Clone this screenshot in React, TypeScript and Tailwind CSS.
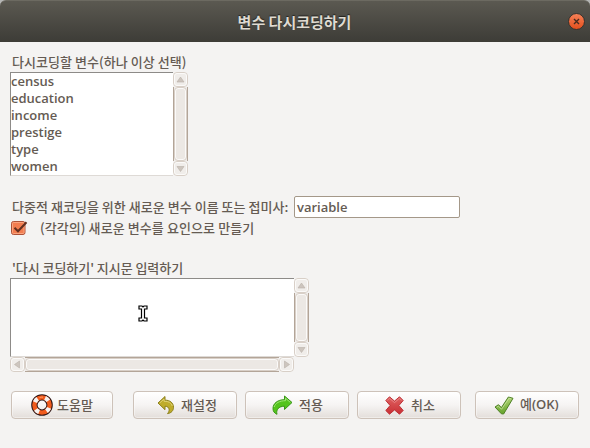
import React from "react";

const variables = ["census", "education", "income", "prestige", "type", "women"];

function Arrow({ dir }: { dir: "up" | "down" | "left" | "right" }) {
  const points = {
    up: "7.5,5 11,10 4,10",
    down: "4,5.5 11,5.5 7.5,10.5",
    left: "4.5,7.5 9.5,4 9.5,11",
    right: "5.5,4 10.5,7.5 5.5,11",
  }[dir];
  return (
    <svg width="15" height="15" viewBox="0 0 15 15" className="block shrink-0">
      <rect x="0.5" y="0.5" width="14" height="14" rx="3.5" fill="#f0edea" stroke="#d8cfc7" />
      <rect x="1.5" y="1.5" width="12" height="12" rx="2.5" fill="none" stroke="#fbfaf9" />
      <polygon points={points} fill="#cdc5be" stroke="#b9b0a8" strokeWidth="0.6" />
    </svg>
  );
}

function VScroll({ height }: { height: string }) {
  return (
    <div className={`flex w-[15px] shrink-0 flex-col ${height}`}>
      <Arrow dir="up" />
      <div className="min-h-0 flex-1 border-x border-[#b3a598] bg-[#f0edea]">
        <div className="h-full rounded-[4px] border border-[#d8cfc7] bg-[#ece8e4] shadow-[inset_0_0_0_1px_#fbfaf9]" />
      </div>
      <Arrow dir="down" />
    </div>
  );
}

function HScroll() {
  return (
    <div className="flex h-[15px] w-[284px]">
      <Arrow dir="left" />
      <div className="min-w-0 flex-1 border-y border-[#b3a598] bg-[#f0edea]">
        <div className="h-full rounded-[4px] border border-[#d8cfc7] bg-[#ece8e4] shadow-[inset_0_0_0_1px_#fbfaf9]" />
      </div>
      <Arrow dir="right" />
    </div>
  );
}

function HelpIcon() {
  return (
    <svg width="22" height="22" viewBox="0 0 22 22" className="block shrink-0">
      <circle cx="11" cy="11" r="7.6" fill="none" stroke="#2c1414" strokeWidth="6.4" />
      <circle cx="11" cy="11" r="7.6" fill="none" stroke="#f05a1c" strokeWidth="4.4" />
      <circle cx="11" cy="11" r="7.6" fill="none" stroke="#f6f2f0" strokeWidth="4.4" strokeDasharray="4.2 7.74" strokeDashoffset="-2.9" />
      <path d="M8.5 3.6Q10 3 12 3.2" fill="none" stroke="#ff9a68" strokeWidth="1" />
    </svg>
  );
}

function UndoIcon() {
  return (
    <svg width="18" height="20" viewBox="0 0 18 20" className="block shrink-0">
      <path d="M1 8L8 1.5V5.2C13 5 16.5 8 16.5 12.3C16.5 15.5 14.5 18 10.5 18.6C12.7 16.4 13.4 11.5 8 11.2V14.7Z" fill="#bfac2b" stroke="#8c801c" />
      <path d="M2.8 7.9L7 4.1V6.3C11.5 6 14.5 8 15.3 11" fill="none" stroke="#ded071" strokeWidth="1" />
    </svg>
  );
}

function ApplyIcon() {
  return (
    <svg width="21" height="20" viewBox="0 0 21 20" className="block shrink-0">
      <path d="M20 7.5L12.5 1V4.7C5.5 4.7 1 8.5 1 13.5C1 16.2 2.3 18.2 5 19.3C3.8 14.8 6.5 11.3 12.5 11.2V14.5Z" fill="#54c41c" stroke="#389516" />
      <path d="M18.3 7.4L13.5 3.2V5.7C7.8 5.7 3.2 8 2.2 12" fill="none" stroke="#a0e675" />
    </svg>
  );
}

function CancelIcon() {
  return (
    <svg width="19" height="19" viewBox="0 0 19 19" className="block shrink-0">
      <defs>
        <linearGradient id="cancelRed" x2="0" y2="1">
          <stop stopColor="#df6262" />
          <stop offset="1" stopColor="#c92f34" />
        </linearGradient>
      </defs>
      <path d="M4.5 0.8L9.5 5.1L14.5 0.8L18.2 4.5L13.9 9.5L18.2 14.5L14.5 18.2L9.5 13.9L4.5 18.2L0.8 14.5L5.1 9.5L0.8 4.5Z" fill="url(#cancelRed)" stroke="#bd3238" strokeLinejoin="round" />
      <path d="M2.3 4.5L4.5 2.3L9.5 6.6L14.5 2.3L16.7 4.5" fill="none" stroke="#ec9292" strokeWidth="0.8" />
    </svg>
  );
}

function OkIcon() {
  return (
    <svg width="20" height="19" viewBox="0 0 20 19" className="block shrink-0">
      <defs>
        <linearGradient id="okGreen" x2="0" y2="1">
          <stop stopColor="#b2d578" />
          <stop offset="1" stopColor="#65a32b" />
        </linearGradient>
      </defs>
      <path d="M1 11L4.5 8.7L7.4 11.6L14.4 1L19 2.3L9.6 18L7.4 17.8Z" fill="url(#okGreen)" stroke="#4e8025" strokeLinejoin="round" />
      <path d="M2.9 11.2L4.4 10.2L7.5 13.3L15.1 2.2L17.3 2.9" fill="none" stroke="#c8e3a0" strokeWidth="0.8" />
    </svg>
  );
}

function Button({ className, children }: { className: string; children: React.ReactNode }) {
  return (
    <button
      className={`flex h-7 shrink-0 items-center rounded-[4px] border border-[#cdc2b9] bg-linear-to-b from-white via-[#f6f4f3] to-[#e3deda] whitespace-nowrap shadow-[inset_0_0_0_1px_#ffffff66] ${className}`}
    >
      {children}
    </button>
  );
}

export default function App() {
  return (
    <div className="h-[448px] w-[590px] overflow-hidden bg-[#f4f3f2] font-['Noto_Sans_CJK_KR',sans-serif] text-[13px] leading-[17px] font-medium text-[#655b53]">
      <div className="bg-[#b5b6b5]">
        <header className="flex h-[42px] items-center justify-between rounded-t-[6px] border-t border-[#6c6a61] bg-linear-to-b from-[#5b5951] to-[#3d3c37] pr-[5px] pl-[16px]">
          <span className="w-0" />
          <h1 className="pl-[5px] text-[15px] font-bold text-[#dfdbd2] [text-shadow:0_-1px_1px_#22211e]">변수 다시코딩하기</h1>
          <svg width="17" height="17" viewBox="0 0 17 17">
            <defs>
              <linearGradient id="closeOrange" x2="0" y2="1">
                <stop stopColor="#f58259" />
                <stop offset="1" stopColor="#e44e1b" />
              </linearGradient>
            </defs>
            <circle cx="8.5" cy="8.5" r="8" fill="url(#closeOrange)" stroke="#33322e" />
            <path d="M6 6L11 11M11 6L6 11" stroke="#492b1e" strokeWidth="1.4" />
          </svg>
        </header>
      </div>

      <main>
        <p className="pt-[11px] pl-3 tracking-[0.05px]">다시코딩할 변수(하나 이상 선택)</p>
        <div className="mt-[2px] ml-[10px] flex">
          <ul className="h-[104px] w-[163px] border-t border-b border-l border-t-[#8d8b88] border-b-[#dedad6] border-l-[#8d8b88] bg-white font-['Open_Sans',sans-serif] font-semibold">
            {variables.map((name) => (
              <li key={name} className="h-[17px]">{name}</li>
            ))}
          </ul>
          <VScroll height="h-[104px]" />
        </div>

        <div className="mt-[20px] flex h-[22px] items-center pl-3">
          <label className="w-[282px] pb-px tracking-[0.03px] whitespace-nowrap">다중적 재코딩을 위한 새로운 변수 이름 또는 접미사:</label>
          <div className="flex h-[22px] w-[166px] items-center rounded-[2px] border border-[#a49889] bg-white pl-[2px] font-['Open_Sans',sans-serif] font-semibold">
            variable
          </div>
        </div>
        <div className="mt-[1px] flex h-[18px] items-center pl-[11px]">
          <svg width="17" height="16" viewBox="0 0 17 16" className="shrink-0">
            <rect x="0.5" y="1.5" width="13.5" height="13" rx="2" fill="#f27d50" stroke="#ad5138" />
            <rect x="1.5" y="2.5" width="11.5" height="11" rx="1" fill="none" stroke="#f9a47f" />
            <path d="M3.5 7.7L7 11.2L15.5 2.3" fill="none" stroke="#623020" strokeWidth="2" />
          </svg>
          <span className="pb-[2px] pl-3 tracking-[0.09px]">(각각의) 새로운 변수를 요인으로 만들기</span>
        </div>

        <p className="mt-[22px] pl-3 tracking-[-0.05px]">'다시 코딩하기' 지시문 입력하기</p>
        <div className="mt-[2px] ml-[10px] flex">
          <div className="flex h-[79px] w-[284px] border-t border-b border-l border-t-[#8d8b88] border-b-[#dedad6] border-l-[#8d8b88] bg-white pt-[26px] pl-[127px]">
            <svg width="10" height="17" viewBox="0 0 10 17">
              <path d="M1 1H4L5 2L6 1H9V4H6.5V13H9V16H6L5 15L4 16H1V13H3.5V4H1Z" fill="white" stroke="black" strokeWidth="1.2" />
            </svg>
          </div>
          <VScroll height="h-[79px]" />
        </div>
        <div className="pl-[10px]"><HScroll /></div>

        <div className="mt-[19px] flex pl-[11px]">
          <Button className="w-[102px] pl-[19px]"><HelpIcon /><span className="pb-[2px] pl-[4px]">도움말</span></Button>
          <Button className="ml-5 w-[104px] pl-[23px]"><UndoIcon /><span className="pb-[2px] pl-[6px]">재설정</span></Button>
          <Button className="ml-2 w-[104px] pl-[26px]"><ApplyIcon /><span className="pb-[2px] pl-[6px]">적용</span></Button>
          <Button className="ml-2 w-[104px] pl-[27px]"><CancelIcon /><span className="pb-[2px] pl-[7px]">취소</span></Button>
          <Button className="ml-[14px] w-[104px] pl-[18px]"><OkIcon /><span className="pb-[2px] pl-[6px]">예<span className="font-['Open_Sans',sans-serif] font-semibold">(OK)</span></span></Button>
        </div>
      </main>
    </div>
  );
}
